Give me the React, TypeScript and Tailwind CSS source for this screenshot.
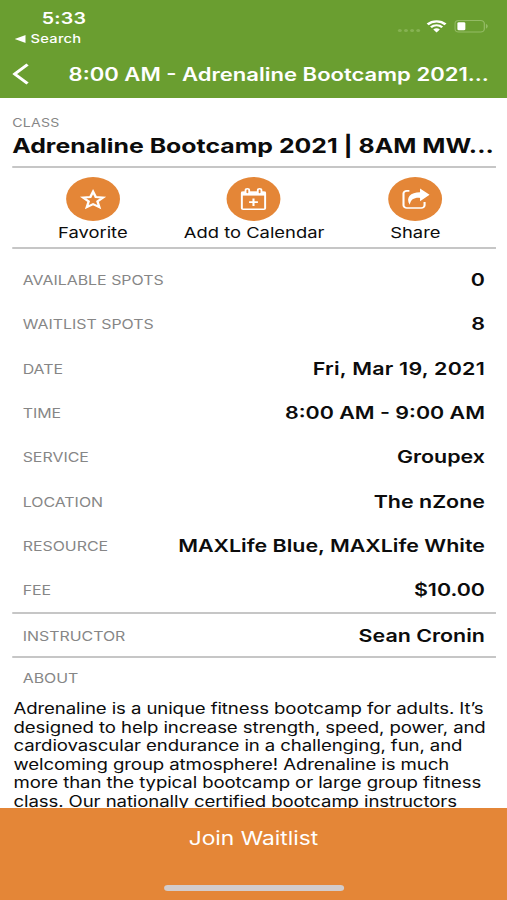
import React from 'react';

interface Detail {
  label: string;
  value: string;
  tracking?: string;
}

const details: Detail[] = [
  { label: 'Available Spots', value: '0' },
  { label: 'Waitlist Spots', value: '8' },
  { label: 'Date', value: 'Fri, Mar 19, 2021', tracking: 'tracking-[0.2px]' },
  { label: 'Time', value: '8:00 AM - 9:00 AM' },
  { label: 'Service', value: 'Groupex' },
  { label: 'Location', value: 'The nZone' },
  { label: 'Resource', value: 'MAXLife Blue, MAXLife White' },
  { label: 'Fee', value: '$10.00' }
];

const aboutLines = [
  'Adrenaline is a unique fitness bootcamp for adults. It’s',
  'designed to help increase strength, speed, power, and',
  'cardiovascular endurance in a challenging, fun, and',
  'welcoming group atmosphere! Adrenaline is much',
  'more than the typical bootcamp or large group fitness',
  'class. Our nationally certified bootcamp instructors'
];

const StarIcon = () => (
  <svg width="22" height="22" viewBox="0 0 22 22" fill="none" stroke="white" strokeWidth="2">
    <path d="M11 3.6l2.2 5.400 6 .5-4.600 3.900 1.500 5.700L11 16.100l-5.100 3 1.500-5.700L2.800 9.500l6-.5z" />
  </svg>
);

const CalendarIcon = () => (
  <svg width="22" height="24" viewBox="0 0 22 24" fill="none" stroke="white">
    <rect x="1.500" y="5.200" width="19" height="17" rx="1" strokeWidth="1.600" />
    <path d="M1 4.600h20v4H1z" fill="white" stroke="none" />
    <rect x="4.500" y="1.800" width="3" height="5.200" rx="1.500" fill="#e48637" strokeWidth="1.500" />
    <rect x="14.500" y="1.800" width="3" height="5.200" rx="1.500" fill="#e48637" strokeWidth="1.500" />
    <path d="M11 11.400v7.600M7.400 15.200h7.200" strokeWidth="1.700" />
  </svg>
);

const ShareIcon = () => (
  <svg width="23" height="22" viewBox="0 0 23 22" fill="none">
    <path
      d="M6.300 2.900H4.200A2.700 2.700 0 0 0 1.500 5.600v11.700A2.700 2.700 0 0 0 4.200 20h11.800a2.700 2.700 0 0 0 2.700-2.700v-3.400"
      stroke="white"
      strokeWidth="1.700"
    />
    <path
      d="M15 0.500l7.800 6.300L15 13.300v-3.400c-5-.4-7.400 1.500-8.400 6.900C2.900 9.500 7.200 4.300 15 4.200z"
      fill="white"
    />
  </svg>
);

const actions = [
  { label: 'Favorite', icon: <StarIcon /> },
  { label: 'Add to Calendar', icon: <CalendarIcon /> },
  { label: 'Share', icon: <ShareIcon /> }
];

const Header = () => (
  <header className="h-[98px] bg-[#6a9e30] text-white">
    <div className="flex h-[54px] justify-between">
      <div className="pt-[8px] pl-[12px]">
        <div className="pl-[22px] text-[16px] leading-5 font-semibold tracking-[0.2px]">5:33</div>
        <div className="mt-[4px] flex items-center gap-[4px] text-[12px] leading-[14px] font-medium tracking-[0.2px]">
          <svg width="9" height="8" viewBox="0 0 9 8">
            <path d="M0 4l9-4v8z" fill="white" />
          </svg>
          Search
        </div>
      </div>
      <div className="flex items-start pt-[19px] pr-[15px]">
        <svg width="20" height="14" viewBox="0 0 20 14" fill="#86b253">
          <circle cx="2.5" cy="11.5" r="1.6" />
          <circle cx="7.5" cy="11.5" r="1.6" />
          <circle cx="12.5" cy="11.5" r="1.6" />
          <circle cx="17.5" cy="11.5" r="1.6" />
        </svg>
        <svg className="ml-[4px]" width="17" height="14" viewBox="0 0 17 14" fill="none" stroke="white">
          <path d="M1.2 5.4a10.3 10.3 0 0 1 14.6 0" strokeWidth="2.3" />
          <path d="M3.9 8.2a6.5 6.5 0 0 1 9.2 0" strokeWidth="2.1" />
          <path d="M8.5 13.4L5.8 10.5a3.8 3.8 0 0 1 5.4 0z" fill="white" stroke="none" />
        </svg>
        <svg className="ml-[6px]" width="28" height="14" viewBox="0 0 28 14">
          <rect x="0.5" y="1.5" width="24" height="11.5" rx="3" fill="none" stroke="#94bb65" />
          <rect x="2.5" y="3.2" width="6.5" height="8" rx="1.2" fill="white" />
          <path d="M25.8 5v4.5c1-.4 1.5-1.2 1.5-2.25S26.8 5.4 25.8 5z" fill="#94bb65" />
        </svg>
      </div>
    </div>
    <div className="flex h-[41px] items-center pl-[10px]">
      <svg className="mb-[2px]" width="14" height="22" viewBox="0 0 14 22" fill="none" stroke="white" strokeWidth="2.7">
        <path d="M12.5 1.500L2 11l10.500 9.500" />
      </svg>
      <h1 className="pl-[32px] text-[18px] font-semibold whitespace-nowrap">
        8:00 AM - Adrenaline Bootcamp 2021...
      </h1>
    </div>
  </header>
);

const DetailRow: React.FC<Detail> = ({ label, value, tracking = 'tracking-normal' }) => (
  <div className="flex h-[44.3px] shrink-0 items-center justify-between pr-[9px] pl-[8.5px]">
    <span className="pt-[1.500px] text-[13px] text-[#868686] uppercase">{label}</span>
    <span className={`text-[17.5px] leading-6 font-semibold whitespace-nowrap ${tracking}`}>{value}</span>
  </div>
);

const App: React.FC = () => {
  return (
    <div className="h-[900px] w-[507px] overflow-hidden bg-white">
      <div className="flex h-[900px] w-[414px] origin-left scale-x-[1.2246] flex-col bg-white font-['Inter',sans-serif] text-[#0c0c0c]">
        <Header />

        <main className="flex h-[710px] flex-col overflow-hidden pr-[9px] pl-[10px]">
          {/* Class title */}
          <div className="h-[70px] shrink-0 border-b-2 border-[#c6c6c6] pt-[17px]">
            <div className="text-[11.5px] leading-4 tracking-[0.2px] text-[#868686]">CLASS</div>
            <h2 className="mt-px text-[20.3px] leading-7 font-bold whitespace-nowrap">
              Adrenaline Bootcamp 2021 | 8AM MW...
            </h2>
          </div>

          {/* Actions */}
          <div className="grid h-[81px] shrink-0 grid-cols-3 border-b-2 border-[#c6c6c6] pt-[9px]">
            {actions.map((action) => (
              <button key={action.label} className="flex flex-col items-center">
                <span className="flex h-11 w-11 items-center justify-center rounded-full bg-[#e48637]">
                  {action.icon}
                </span>
                <span className="mt-[2px] text-[15px] leading-5 whitespace-nowrap">{action.label}</span>
              </button>
            ))}
          </div>

          {/* Details */}
          <div className="h-[365px] shrink-0 border-b-2 border-[#c6c6c6] pt-[9px]">
            {details.map((detail) => (
              <DetailRow key={detail.label} {...detail} />
            ))}
          </div>
          <div className="h-[44px] shrink-0 border-b-2 border-[#c6c6c6]">
            <DetailRow label="Instructor" value="Sean Cronin" />
          </div>

          {/* About */}
          <div className="pt-[10px]">
            <div className="pl-[8.5px] text-[13px] leading-5 text-[#868686]">ABOUT</div>
            <p className="mt-[12px] pl-px text-[15.2px] leading-[18.5px] tracking-[-0.08px] whitespace-nowrap">
              {aboutLines.map((line) => (
                <span key={line} className="block">{line}</span>
              ))}
            </p>
          </div>
        </main>

        <footer className="flex h-[92px] flex-col items-center bg-[#e48637] pt-[16px]">
          <button className="text-[18.6px] leading-7 text-white">Join Waitlist</button>
          <div className="mt-[33px] h-[6px] w-[147px] rounded-full bg-[#d3cccb]" />
        </footer>
      </div>
    </div>
  );
};

export default App;
